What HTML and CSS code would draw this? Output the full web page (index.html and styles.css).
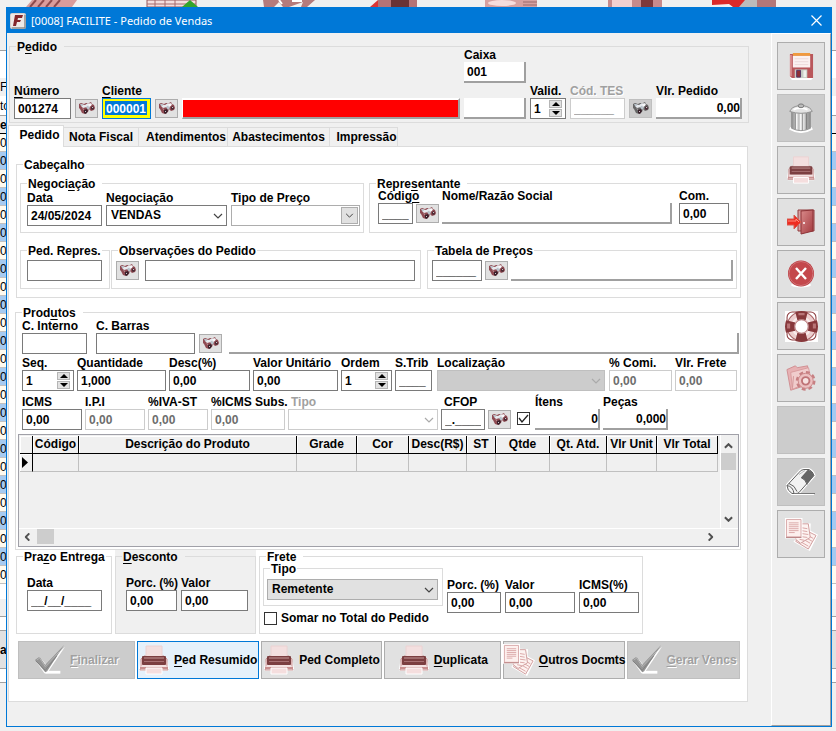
FILE: index.html
```html
<!DOCTYPE html>
<html lang="pt-BR">
<head>
<meta charset="utf-8">
<title>[0008] FACILITE - Pedido de Vendas</title>
<link rel="stylesheet" href="styles.css">
</head>
<body>
<svg class="defs" aria-hidden="true">
  <defs>
    <linearGradient id="g-red" x1="0" y1="0" x2="1" y2="1"><stop offset="0" stop-color="#d98a8a"/><stop offset="1" stop-color="#a33a3f"/></linearGradient>
    <linearGradient id="g-gray" x1="0" y1="0" x2="1" y2="0"><stop offset="0" stop-color="#8c8c8c"/><stop offset=".4" stop-color="#f4f4f4"/><stop offset="1" stop-color="#8a8a8a"/></linearGradient>
  </defs>
  <symbol id="i-bino" viewBox="0 0 16 13">
    <path d="M0 2l2-1 3 1 2-1 3 0 2-1 1 2 2 1 1 3-1 2-3 1-2-2-1 3-3 2-3-1-2-4-2-2z" fill="var(--lens)"/>
    <path d="M2 2l4 1 3-2 2 1-3 3-4 1-2-2z" fill="#e6eaee"/>
    <path d="M1 2h2l1 2-2 0zM7 5l3-2 1 3-2 2z" fill="#b9c4cc"/>
    <path d="M11 1l2 1-1 2-2 1-1-2z" fill="#f7f8fa"/>
    <path d="M5 8l3-1 1 2-2 3-2-1z" fill="#38202a"/>
    <path d="M12 5l2-1 1 3-2 1-1-1z" fill="#4a2a33"/>
    <path d="M6 9h1v1H6zM13 5h1v1h-1zM3 6l2 1v1z" fill="#cfc3c8"/>
  </symbol>
  <symbol id="i-chev" viewBox="0 0 10 6"><path d="M1 1l4 4 4-4" fill="none" stroke="currentColor" stroke-width="1.2"/></symbol>
  <symbol id="i-arrow" viewBox="0 0 10 6"><path d="M1 1l4 4 4-4" fill="none" stroke="#505050" stroke-width="2.2"/></symbol>
  <symbol id="i-printer" viewBox="0 0 32 30">
    <path d="M2 18l-1 6 1 2h28l1-2-1-6-3-4H5z" fill="#fff"/>
    <path d="M3 14l3-3h20l3 3v8l1 3H2l1-3z" fill="#ecd0d0" stroke="#c99595" stroke-width="1"/>
    <path d="M8 1h16v11H8z" fill="#f3dfdf" stroke="#ecd2d2" stroke-width="1"/>
    <rect x="4" y="11" width="24" height="9" rx="1" fill="#7c3f41"/>
    <path d="M6 12h20v2H6z" fill="#a06b6c"/><path d="M6 16h20v1H6z" fill="#a87072"/>
    <path d="M2 22h28v2H2z" fill="#c98f8f"/><path d="M4 20h24l1 2H3z" fill="#f4e2e2"/>
    <path d="M8 23h16v6H8z" fill="#f5dede" stroke="#fff"/>
  </symbol>
  <symbol id="i-docs" viewBox="0 0 34 34">
    <g fill="#fff" stroke="#fff" stroke-width="3"><path d="M21 12l11 6-7 14-14-8z"/><path d="M12 6l13 1-1 17-12-2z"/></g>
    <path d="M20 12l12 6-8 14-13-8z" fill="#fdf1ef" stroke="#cf9d9d"/>
    <path d="M22 17l7 4M21 20l7 4M19 22l7 4M17 25l7 4" stroke="#d9a4a4"/>
    <path d="M12 6l12 0 2 14-10 6-5-4z" fill="#fdf3f1" stroke="#cf9d9d"/>
    <path d="M17 10l6 1M17 13l6 1M17 16l7 1M15 19l8 1M15 22l5 1" stroke="#d9a4a4"/>
    <path d="M0 0h18v21H0z" fill="#fff"/>
    <path d="M1.500 1.500h15v18h-15z" fill="#fdf0ee" stroke="#d9a9a9"/>
    <path d="M4 5h10M4 7h10M4 9h10M4 11h10M4 13h10M4 15h6" stroke="#dba9a9"/>
    <path d="M1 20h16" stroke="#b57c7c"/>
  </symbol>
  <symbol id="i-check" viewBox="0 0 34 32">
    <path d="M12 29h16" stroke="#fff" stroke-width="3"/>
    <path d="M2 17l5-3 6 7L33 2 14 30h-3z" fill="#fff"/>
    <path d="M1 16l4-3 2 1 5 7L32 0 14 28l-2 1z" fill="#959595"/>
    <path d="M3 16l3-2 6 9L27 7" fill="none" stroke="#b5b5b5"/>
    <path d="M2 17l10 10L24 12" fill="none" stroke="#7f7f7f"/>
  </symbol>
  <symbol id="i-disk" viewBox="0 0 26 28">
    <path d="M1 3l2-2h22v25l-2 2H3l-2-3z" fill="#fff"/>
    <path d="M1 1h24v25H3l-2-2z" fill="#b9575b"/><path d="M1 2h2v22h-2z" fill="#d98f90"/>
    <path d="M4 0h18v3H4z" fill="#f09a3e"/><path d="M4 3h18v12H4z" fill="#fbf1f1"/>
    <path d="M6 6h14M6 9h14M6 12h14" stroke="#ecd9db"/>
    <path d="M6 17h13v9H6z" fill="#c6cdc5"/><path d="M8 18h4v7H8z" fill="#8e2f35" stroke="#536"/><path d="M15 18h3v7h-3z" fill="#eef1ec"/>
  </symbol>
  <symbol id="i-trash" viewBox="0 0 28 32">
    <path d="M2 27q12 7 24 0" stroke="#fff" stroke-width="3" fill="none"/>
    <path d="M4 8h20v19q-10 5-20 0z" fill="url(#g-gray)" stroke="#929292"/>
    <path d="M8 11v17M12 11v18M16 11v18M20 11v17" stroke="#777" stroke-width="1"/><path d="M9 11v17M13 11v18M17 11v18" stroke="#fff"/>
    <path d="M2 9q2-5 9-6h6q7 1 9 6-12 4-24 0z" fill="#e3e3e3" stroke="#8e8e8e"/><path d="M6 7q7-3 15 0" stroke="#fff" fill="none" stroke-width="2"/>
    <ellipse cx="14" cy="3" rx="3" ry="2" fill="#bbb" stroke="#777"/>
  </symbol>
  <symbol id="i-exit" viewBox="0 0 28 26">
    <path d="M11 1h16v21H11z" fill="#d9a0a0" stroke="#913a3d"/>
    <path d="M14 2l12-1v21l-12 3z" fill="url(#g-red)" stroke="#8d3337"/>
    <path d="M0 10h7V6l7 7-7 7v-4H0z" fill="#ee2c20" stroke="#d85b50"/><path d="M1 12h8v-2l3 3" stroke="#ff8b7d" fill="none"/>
    <circle cx="17" cy="14" r="1" fill="#fff"/>
  </symbol>
  <symbol id="i-cancel" viewBox="0 0 28 28">
    <ellipse cx="14" cy="25" rx="10" ry="2.5" fill="#fff"/>
    <circle cx="14" cy="13.500" r="13" fill="#b9383d"/><circle cx="14" cy="13.500" r="12" fill="#c4484c" stroke="#d17578"/>
    <path d="M9 8l10 11M19 8L9 19" stroke="#fff" stroke-width="2.4"/>
  </symbol>
  <symbol id="i-buoy" viewBox="0 0 32 30">
    <rect x="0" y="0" width="32" height="30" fill="#fff"/>
    <rect x="2" y="1" width="28" height="27" rx="5" fill="#fff" stroke="#8b3a3d"/>
    <circle cx="16" cy="15" r="10.500" fill="none" stroke="#edcfcf" stroke-width="8"/>
    <circle cx="16" cy="15" r="9" fill="none" stroke="#f9ecec" stroke-width="2"/>
    <circle cx="16" cy="15" r="14" fill="none" stroke="#a96466"/>
    <circle cx="16" cy="15" r="6.500" fill="#fff" stroke="#b87a7c"/>
    <path d="M10 1q6-2 12 0l-2 8q-4-2-8 0zM10 29q6 2 12 0l-2-8q-4 2-8 0zM1 9q-2 6 0 12l9-2q-2-4 0-8zM31 9q2 6 0 12l-9-2q2-4 0-8z" fill="#87383b"/>
    <path d="M13 2h6v2h-6zM2 12h3v5H2zM27 12h3v5h-3z" fill="#b87476"/>
  </symbol>
  <symbol id="i-gear" viewBox="0 0 32 28">
    <path d="M1 5l9-4 2 2 11-2 1 20-19 6z" fill="#e7b1b3" stroke="#cf8d90"/>
    <path d="M5 8l19-5 3 14-20 9z" fill="#f0cccc" stroke="#d79b9d"/><path d="M8 12l-1 12" stroke="#d39598"/>
    <circle cx="21" cy="17" r="9" fill="none" stroke="#c77f82" stroke-width="3" stroke-dasharray="4 3.070"/>
    <circle cx="21" cy="17" r="8" fill="#ecc0c1" stroke="#cb8688"/><circle cx="21" cy="17" r="4" fill="#f6e1e0" stroke="#bf7376" stroke-width="2"/>
  </symbol>
  <symbol id="i-eraser" viewBox="0 0 30 27">
    <path d="M1 17L13 4q2-3 5-3h5q4 2 5 6L13 24q-1 1-3 1H6q-5-3-5-8z" fill="#fafafa" stroke="#fff" stroke-width="3"/>
    <path d="M1 17L13 4q2-3 5-3h5q4 2 5 6L13 24q-1 1-3 1H6q-5-3-5-8z" fill="#f2f2f2" stroke="#606060"/>
    <path d="M22 1q5 2 6 6l-7 9q-1-5-6-7z" fill="#666"/>
    <path d="M15 9q5 2 6 7M1 17q6 1 7 8M3 15q6 2 8 8" fill="none" stroke="#606060"/>
    <path d="M13 6l6-4" stroke="#bbb"/><path d="M8 25h21" stroke="#777"/><path d="M9 26h19" stroke="#fff"/>
  </symbol>
</svg>

<div class="desktop">
  <div class="strip-top">
    <svg viewBox="0 0 836 7" preserveAspectRatio="xMinYMin slice" aria-hidden="true">
      <path d="M32 0h45l-5 7H26z" fill="#d99c9c"/><path d="M36 0l-6 7M44 0l-6 7M52 0l-6 7M60 0l-6 7" stroke="#8d4a4d" stroke-width="2"/>
      <path d="M147 0h49v7h-49z" fill="#f4dede" stroke="#94575a"/><path d="M155 0v7M165 0v7M175 0v7M147 4h49" stroke="#a66a6c"/><path d="M182 7l8-7 8 7z" fill="#34a52c"/>
      <path d="M263 0h52l-8 7h-6l2-5-14 5h-6l-4-5-5 5h-10z" fill="#b57b7c"/><path d="M279 0l3 4M292 1l10 0" stroke="#fff" stroke-width="2"/>
      <path d="M370 7l8-7v7z" fill="#dc3535"/><path d="M378 0h39v7h-39z" fill="#b57376"/><path d="M391 0h18v7h-18z" fill="#693336"/>
      <path d="M485 0h52v7h-52z" fill="#d6a1a1"/><ellipse cx="502" cy="3" rx="14" ry="3" fill="#f6dcdc"/><path d="M523 2h14M523 5h14" stroke="#99696a"/>
      <path d="M608 0h54v7h-54z" fill="#c78a8c"/><path d="M612 0h20v7h-20z" fill="#f3d0d0"/><path d="M641 0h12v7h-12z" fill="#7d393c"/>
      <path d="M712 0h33v7h-12l-4-3-17 1z" fill="#db2929"/><path d="M745 0h12v7h-18z" fill="#bbb"/><path d="M757 0h19v7h-19z" fill="#b27779"/>
    </svg>
  </div>
  <div class="strip strip-left" aria-hidden="true">
    <span class="s-head"></span><span class="s-field"></span><span class="s-cap">F:</span><span class="s-cell">to</span><span class="s-title">e</span>
    <span class="s-rows"><i>0</i><i>0</i><i>0</i><i>0</i><i>0</i><i>0</i><i>0</i><i>0</i><i>0</i><i>0</i><i>0</i><i>0</i><i>0</i><i>0</i><i>0</i><i>0</i><i>0</i><i>0</i><i>0</i><i>0</i><i>0</i><i>0</i><i>0</i><i>0</i><i>0</i></span>
    <span class="s-gap"></span><span class="s-bar"></span><span class="s-line"></span><span class="s-btn">a</span><span class="s-line"></span>
  </div>

  <main class="window">
    <header class="titlebar">
      <svg class="logo" viewBox="0 0 16 16" aria-hidden="true"><rect x="0" y="0" width="16" height="16" rx="2" fill="#d8d0cc"/><rect x="1" y="1" width="13" height="13" fill="#efe9e6"/><path d="M15 2v13H2" stroke="#777" fill="none"/><path d="M5 2h8l-1 3H8L7.500 7H11l-1 2H7l-1 4H3z" fill="#84262b"/></svg>
      <h1>[0008] FACILITE - Pedido de Vendas</h1>
      <button class="close" aria-label="Fechar"><svg viewBox="0 0 11 11"><path d="M.5.5l10 10M10.500.5l-10 10" stroke="#fff" stroke-width="1.200"/></svg></button>
    </header>

    <div class="client">
      <div class="content">
        <fieldset class="group order">
          <legend class="wide">P<u>e</u>dido</legend>
          <div class="field caixa"><label for="caixa">Caixa</label><input id="caixa" class="flat" value="001" readonly></div>
          <div class="field"><label for="numero"><u>N</u>úmero</label><input id="numero" value="001274"></div>
          <button class="find" aria-label="Buscar número"><svg><use href="#i-bino"/></svg></button>
          <div class="field"><label for="cliente"><u>C</u>liente</label><input id="cliente" class="active" value="000001"></div>
          <button class="find" aria-label="Buscar cliente"><svg><use href="#i-bino"/></svg></button>
          <input class="flat alert" aria-label="Nome do cliente" readonly>
          <input class="flat" aria-label="Situação" readonly>
          <div class="field"><label for="valid">Valid.</label><div class="spin"><input id="valid" value="1"><span><button aria-label="Mais"></button><button aria-label="Menos"></button></span></div></div>
          <div class="field off ghost"><label for="tes">Cód. TES</label><input id="tes" value="______" disabled></div>
          <button class="find off" aria-label="Buscar TES" disabled><svg><use href="#i-bino"/></svg></button>
          <div class="field"><label for="vlr">Vlr. Pedido</label><input id="vlr" class="flat num" value="0,00" readonly></div>
        </fieldset>

        <nav class="tabs" role="tablist">
          <button role="tab" aria-selected="true" class="t1">Pedido</button><button role="tab" class="t2">Nota Fiscal</button><button role="tab" class="t3">Atendimentos</button><button role="tab" class="t4">Abastecimentos</button><button role="tab" class="t5">Impressão</button>
        </nav>

        <section class="page">
          <fieldset class="group head">
            <legend>Cabeçalho</legend>
            <div class="line">
              <fieldset class="group nego">
                <legend class="wide">Negoci<u>a</u>ção</legend>
                <div class="field w75"><label for="data">Data</label><input id="data" value="24/05/2024"></div>
                <div class="field w121"><label for="neg">Negociação</label><div class="sel"><select id="neg"><option>VENDAS</option></select><svg><use href="#i-chev"/></svg></div></div>
                <div class="field grow"><label for="tpreco">Tipo de Preço</label><div class="sel boxed"><select id="tpreco"><option></option></select><svg><use href="#i-chev"/></svg></div></div>
              </fieldset>
              <fieldset class="group rep">
                <legend class="wide">Repre<u>s</u>entante</legend>
                <div class="field w35"><label for="rcod">Códig<u>o</u></label><input id="rcod" value="____"></div>
                <button class="find" aria-label="Buscar representante"><svg><use href="#i-bino"/></svg></button>
                <div class="field grow"><label for="rnome">Nome/Razão Social</label><input id="rnome" class="flat" readonly></div>
                <div class="field w50 apart"><label for="com">Com.</label><input id="com" value="0,00"></div>
              </fieldset>
            </div>
            <div class="line second">
              <fieldset class="group prep"><legend>Ped. Repres.</legend><input class="grow" aria-label="Ped. Repres."></fieldset>
              <fieldset class="group obs"><legend>Observações do Pedido</legend><button class="find" aria-label="Buscar observação"><svg><use href="#i-bino"/></svg></button><input class="grow" aria-label="Observações do Pedido"></fieldset>
              <fieldset class="group tab"><legend>Tabela de Preços</legend><input class="w50" aria-label="Código da tabela" value="______"><button class="find" aria-label="Buscar tabela"><svg><use href="#i-bino"/></svg></button><input class="flat grow" aria-label="Tabela de Preços" readonly></fieldset>
            </div>
          </fieldset>

          <fieldset class="group prod">
            <legend class="wide">Prod<u>u</u>tos</legend>
            <div class="row r1">
              <div class="field w65"><label for="cint">C. Interno</label><input id="cint"></div>
              <div class="field w99 apart"><label for="cbar">C. Barras</label><input id="cbar"></div>
              <button class="find" aria-label="Buscar produto"><svg><use href="#i-bino"/></svg></button>
              <input class="flat grow wideflat" aria-label="Produto" readonly>
            </div>
            <div class="row r2">
              <div class="field w52"><label for="seq">Seq.</label><div class="spin"><input id="seq" value="1"><span><button aria-label="Mais"></button><button aria-label="Menos"></button></span></div></div>
              <div class="field w89"><label for="qtd">Quantidade</label><input id="qtd" value="1,000"></div>
              <div class="field w81"><label for="desc">Desc(%)</label><input id="desc" value="0,00"></div>
              <div class="field w85"><label for="vun">Valor Unitário</label><input id="vun" value="0,00"></div>
              <div class="field w51"><label for="ordem">Ordem</label><div class="spin"><input id="ordem" value="1"><span><button aria-label="Mais"></button><button aria-label="Menos"></button></span></div></div>
              <div class="field w37"><label for="strib">S.Trib</label><input id="strib" value="____"></div>
              <div class="field grow loc"><label for="loc">Localização</label><div class="sel fill"><select id="loc" disabled><option></option></select><svg><use href="#i-chev"/></svg></div></div>
              <div class="field w63"><label for="comi">% Comi.</label><input id="comi" value="0,00" disabled></div>
              <div class="field w62"><label for="frete">Vlr. Frete</label><input id="frete" value="0,00" disabled></div>
            </div>
            <div class="row r3">
              <div class="field w60"><label for="icms">ICMS</label><input id="icms" value="0,00"></div>
              <div class="field w60"><label for="ipi">I.P.I</label><input id="ipi" value="0,00" disabled></div>
              <div class="field w60"><label for="iva">%IVA-ST</label><input id="iva" value="0,00" disabled></div>
              <div class="field w74"><label for="subs">%ICMS Subs.</label><input id="subs" value="0,00" disabled></div>
              <div class="field off inset w150"><label for="tipo">Tipo</label><div class="sel"><select id="tipo" disabled><option></option></select><svg><use href="#i-chev"/></svg></div></div>
              <div class="field inset w44"><label for="cfop">CFOP</label><input id="cfop" value="_.____"></div>
              <button class="find" aria-label="Buscar CFOP"><svg><use href="#i-bino"/></svg></button>
              <label class="tick"><input type="checkbox" checked aria-label="Usar CFOP"><svg viewBox="0 0 13 13"><path d="M2 6l3 4 6-7" fill="none" stroke="#222" stroke-width="1.300"/></svg></label>
              <div class="field w65"><label for="itens">Ítens</label><input id="itens" class="flat num" value="0" readonly></div>
              <div class="field w65"><label for="pecas">Peças</label><input id="pecas" class="flat num" value="0,000" readonly></div>
            </div>

            <div class="grid">
              <div class="sheet">
                <table>
                  <colgroup><col class="c12"><col class="c46"><col><col class="c60"><col class="c52"><col class="c58"><col class="c29"><col class="c54"><col class="c57"><col class="c50"><col class="c61"></colgroup>
                  <thead><tr><th></th><th>Código</th><th>Descrição do Produto</th><th>Grade</th><th>Cor</th><th>Desc(R$)</th><th>ST</th><th>Qtde</th><th>Qt. Atd.</th><th>Vlr Unit</th><th>Vlr Total</th></tr></thead>
                  <tbody><tr><th scope="row"><svg class="ptr" viewBox="0 0 6 11"><path d="M0 0l6 5.500-6 5.500z"/></svg></th><td></td><td></td><td></td><td></td><td></td><td></td><td></td><td></td><td></td><td></td></tr></tbody>
                </table>
              </div>
              <div class="vbar"><svg class="up"><use href="#i-arrow"/></svg><span class="thumb"></span><svg class="down"><use href="#i-arrow"/></svg></div>
              <div class="hbar"><svg class="left"><use href="#i-arrow"/></svg><span class="thumb"></span><svg class="right"><use href="#i-arrow"/></svg></div>
            </div>
          </fieldset>

          <div class="lower">
            <div class="slot"><fieldset class="group prazo"><legend>Pra<u>z</u>o Entrega</legend><div class="field w75"><label for="pdata">Data</label><input id="pdata" value="__/__/____"></div></fieldset></div>
            <div class="slot shaded"><fieldset class="group descto"><legend class="wide"><u>D</u>esconto</legend>
              <div class="field w51"><label for="dp">Porc. (%)</label><input id="dp" value="0,00"></div>
              <div class="field w67"><label for="dv">Valor</label><input id="dv" value="0,00"></div></fieldset></div>
            <div class="slot"><fieldset class="group frete"><legend class="wide">Fre<u>t</u>e</legend>
              <div class="mode">
                <fieldset class="group ftipo"><legend>Tipo</legend><div class="sel btnlike"><select aria-label="Tipo"><option>Remetente</option></select><svg><use href="#i-chev"/></svg></div></fieldset>
                <label class="tick"><input type="checkbox">Somar no Total do Pedido</label>
              </div>
              <div class="field w54"><label for="fp">Porc. (%)</label><input id="fp" value="0,00"></div>
              <div class="field w70"><label for="fv">Valor</label><input id="fv" value="0,00"></div>
              <div class="field w60"><label for="fi">ICMS(%)</label><input id="fi" value="0,00"></div>
            </fieldset></div>
          </div>

          <div class="actions">
            <button class="a1" disabled><svg><use href="#i-check"/></svg><span><u>F</u>inalizar</span></button>
            <button class="a2 hot"><svg><use href="#i-printer"/></svg><span><u>P</u>ed Resumido</span></button>
            <button class="a2"><svg><use href="#i-printer"/></svg><span>Ped Completo</span></button>
            <button class="a1"><svg><use href="#i-printer"/></svg><span><u>D</u>uplicata</span></button>
            <button class="a2"><svg><use href="#i-docs"/></svg><span><u>O</u>utros Docmts</span></button>
            <button class="a3" disabled><svg><use href="#i-check"/></svg><span><u>G</u>erar Vencs</span></button>
          </div>
        </section>
      </div>

      <aside class="toolbar">
        <button aria-label="Salvar"><svg class="s26"><use href="#i-disk"/></svg></button>
        <button aria-label="Excluir" disabled><svg><use href="#i-trash"/></svg></button>
        <button aria-label="Imprimir"><svg><use href="#i-printer"/></svg></button>
        <button aria-label="Sair"><svg class="s28"><use href="#i-exit"/></svg></button>
        <button aria-label="Cancelar"><svg class="s28"><use href="#i-cancel"/></svg></button>
        <button aria-label="Ajuda"><svg class="s32"><use href="#i-buoy"/></svg></button>
        <button aria-label="Configurar"><svg><use href="#i-gear"/></svg></button>
        <button aria-label="Vazio" disabled></button>
        <button aria-label="Limpar" disabled><svg><use href="#i-eraser"/></svg></button>
        <button aria-label="Documentos"><svg class="s32"><use href="#i-docs"/></svg></button>
      </aside>
    </div>
  </main>

  <div class="strip strip-right" aria-hidden="true">
    <span class="s-head"></span><span class="s-field"></span><span class="s-cap"></span><span class="s-cell"></span><span class="s-title"></span>
    <span class="s-rows"><i></i><i></i><i></i><i></i><i></i><i></i><i></i><i></i><i></i><i></i><i></i><i></i><i></i><i></i><i></i><i></i><i></i><i></i><i></i><i></i><i></i><i></i><i></i><i></i><i></i></span>
    <span class="s-gap"></span><span class="s-bar"></span><span class="s-line"></span><span class="s-btn"></span><span class="s-line"></span>
  </div>
</div>
</body>
</html>
```
FILE: styles.css
```css
* { box-sizing: border-box; }
body {
  margin: 0;
  background: #f0f0f0;
  color: #000;
  font: bold 12px/13px "Liberation Sans", Arial, sans-serif;
}
.defs { position: absolute; width: 0; height: 0; }
button, input, select { font: inherit; color: inherit; margin: 0; padding: 0; border-radius: 0; }
svg { display: block; flex: none; }
u { text-underline-offset: 2px; }

/* desktop behind the window */
.desktop {
  display: grid;
  grid-template: 7px 1fr / 6px 1fr 4px;
  min-height: 100vh;
  padding-bottom: 4px;
}
.strip-top { grid-column: 1 / -1; overflow: hidden; }
.strip-top svg { width: 836px; height: 7px; }
.strip { display: flex; flex-direction: column; overflow: hidden; font-weight: normal; min-width: 0; }
.strip span { flex: none; overflow: hidden; white-space: nowrap; }
.s-head { height: 43px; }
.s-field { height: 28px; background: #fff; border-top: 1px solid #a0a0a0; }
.s-cap { height: 18px; line-height: 18px; }
.s-cell { height: 20px; line-height: 20px; background: #fff; border-bottom: 1px solid #a0a0a0; }
.s-title { height: 18px; line-height: 18px; font-weight: bold; border-bottom: 1px solid #000; }
.s-rows i { display: block; height: 18px; line-height: 18px; font-style: normal; background: #fffbf0; border-bottom: 1px solid #c0c0c0; }
.s-rows i:nth-child(even) { background: #a6caf0; }
.s-gap { height: 15px; background: #fff; }
.s-bar { height: 18px; border-bottom: 1px solid #a0a0a0; }
.s-line { height: 14px; background: #fff; border-bottom: 1px solid #a0a0a0; }
.s-btn { height: 38px; line-height: 38px; background: #e1e1e1; border-bottom: 1px solid #a0a0a0; font-weight: bold; }

/* window frame */
.window { display: flex; flex-direction: column; min-width: 0; border: 1px solid #0078d7; background: #f0f0f0; }
.titlebar { display: flex; align-items: center; gap: 5px; height: 25px; padding: 0 9px 0 3px; background: #0078d7; color: #fff; }
.logo { width: 16px; height: 16px; }
.titlebar h1 { flex: 1; margin: 0; font: 11px/16px "Noto Sans", "Open Sans", sans-serif; }
.close { border: 0; background: none; }
.close svg { width: 11px; height: 11px; }
.client { flex: 1; display: flex; }
.content { flex: 1; min-width: 0; padding: 13px 22px 0 1px; }

/* group boxes */
.group { position: relative; display: flex; min-width: 0; margin: 0; padding: 0; border: 1px solid #dcdcdc; background: inherit; }
.group > legend { position: absolute; top: -6px; left: 6px; padding: 0 1px; line-height: 12px; background: inherit; white-space: nowrap; }
.group > legend.wide { padding-right: 7px; }

/* fields */
.field { display: flex; flex-direction: column; min-width: 0; }
.field label { height: 13px; white-space: nowrap; }
input:not([type]) { display: block; width: 100%; min-width: 0; height: 21px; padding: 0 3px; background: #fff; border: 1px solid #7a7a7a; outline: 0; }
input:not([type]):disabled { color: #6d6d6d; border-color: #ccc; }
input.grow { width: auto; }
input.w50 { width: 50px; }
input.flat:not([type]) { border: 0 solid #a0a0a0; border-width: 0 2px 2px 0; }
input.num { text-align: right; padding-right: 0; }
input.active:not([type]) { color: #fff; border-color: #0078d7; background: linear-gradient(#0078d7, #0078d7) 2px 2px / 42px 14px no-repeat #ff0; }
input.alert:not([type]) { background: #f00; border-width: 2px 2px 2px 1px; border-color: #fff #a0a0a0 #a0a0a0 #fff; }
.off label { color: #a0a0a0; }
.inset label { padding-left: 3px; }
.ghost label { text-shadow: 1px 1px #fff; }
.grow { flex: 1; }
.find { display: flex; align-items: center; justify-content: center; flex: none; width: 23px; height: 19px; margin-bottom: 1px; background: #e1e1e1; border: 1px solid #adadad; --lens: #8f4a52; }
.find svg { width: 16px; height: 13px; }
.find.off { background: #ccc; border-color: #bfbfbf; --lens: #666; }
.spin { display: flex; align-items: center; height: 21px; padding-right: 3px; background: #fff; border: 1px solid #7a7a7a; }
.spin input:not([type]) { flex: 1; height: 19px; border: 0; }
.spin span { display: grid; gap: 1px; flex: none; }
.spin button { display: flex; align-items: center; justify-content: center; width: 13px; height: 8px; background: #e1e1e1; border: 1px solid #b5b5b5; }
.spin button::before { content: ""; border: 4px solid transparent; border-top: 0; border-bottom: 4px solid #000; }
.spin button + button::before { border-bottom: 0; border-top: 4px solid #000; }
.sel { position: relative; height: 21px; }
.sel select { display: block; width: 100%; height: 21px; padding: 0 20px 0 4px; appearance: none; background: #fff; border: 1px solid #7a7a7a; opacity: 1; }
.sel svg { position: absolute; right: 4px; top: 8px; width: 10px; height: 6px; color: #444; pointer-events: none; }
.sel.boxed select { border-color: #adadad; }
.sel.boxed svg { right: 2px; top: 2px; width: 17px; height: 17px; padding: 5px 3px; background: #e1e1e1; border: 1px solid #adadad; }
.sel select:disabled { border-color: #ccc; }
.sel select:disabled + svg { color: #aaa; }
.sel.fill select { background: #ccc; border-color: #bfbfbf; }
.sel.btnlike select { background: #e1e1e1; border-color: #adadad; }
.tick { position: relative; display: flex; align-items: center; gap: 4px; white-space: nowrap; }
.tick input { appearance: none; width: 13px; height: 13px; background: #fff; border: 1px solid #333; }
.tick svg { position: absolute; left: 0; top: 0; width: 13px; height: 13px; }
.w35 { width: 35px; } .w37 { width: 37px; } .w44 { width: 44px; } .w50 { width: 50px; }
.w51 { width: 51px; } .w52 { width: 52px; } .w54 { width: 54px; } .w60 { width: 60px; }
.w62 { width: 62px; } .w63 { width: 63px; } .w65 { width: 65px; } .w67 { width: 67px; }
.w70 { width: 70px; } .w74 { width: 74px; } .w75 { width: 75px; } .w81 { width: 81px; }
.w85 { width: 85px; } .w89 { width: 89px; } .w99 { width: 99px; } .w121 { width: 121px; }
.w150 { width: 150px; }

/* order header */
.order {
  display: grid;
  grid-template-columns: 57px 23px 49px 23px 1fr 62px 36px 55px 23px 86px;
  gap: 2px 4px;
  align-items: end;
  margin-left: 1px;
  padding: 2px 6px 3px 4px;
  background: #f0f0f0;
}
.caixa { grid-column: 6; }
.order > .field:nth-of-type(2) { grid-column: 1; }

/* tabs */
.tabs { display: flex; align-items: flex-end; height: 22px; margin-top: 2px; }
.tabs button { height: 19px; margin-bottom: 1px; padding: 0; background: #f0f0f0; border: 1px solid #dcdcdc; border-width: 1px 1px 0 0; white-space: nowrap; }
.tabs button[aria-selected] { position: relative; z-index: 1; height: 22px; margin-bottom: 0; padding: 0 0 2px 7px; background: #fff; border-left-width: 1px; }
.t1 { width: 56px; } .t2 { width: 75px; } .t3 { width: 89px; } .t4 { width: 102px; } .t5 { width: 68px; }
.tabs .t3, .tabs .t5 { padding-left: 6px; }
.page { margin: -1px 1px 0 0; padding: 17px 6px 22px; background: #fff; border: 1px solid #dcdcdc; }

/* header group */
.head { flex-direction: column; gap: 17px; margin-left: 1px; padding: 18px 3px 8px; }
.line { display: flex; gap: 5px; background: inherit; }
.nego { width: 344px; gap: 4px; padding: 8px 3px 6px 6px; }
.rep { flex: 1; align-items: flex-end; gap: 3px; padding: 6px 7px 8px 8px; }
.rep .apart { margin-left: 4px; }
.second { gap: 0; }
.second .group { align-items: center; padding: 9px 3px 7px 4px; gap: 3px; }
.second .prep { width: 90px; padding: 9px 7px 7px 6px; }
.second .obs { width: 310px; margin: 0 6px 0 1px; padding-right: 5px; gap: 6px; }
.second .tab { flex: 1; }

/* products */
.prod { flex-direction: column; margin-top: 14px; padding: 7px 1px 2px 2px; }
.row { display: flex; align-items: flex-end; gap: 3px; padding: 0 2px 0 4px; }
.r1 { padding-right: 0; gap: 4px; }
.r1 .apart { margin-left: 5px; }
.r1 .wideflat { margin-left: 3px; }
.r2 { margin-top: 3px; }
.loc { margin: 0 1px 0 2px; }
.r3 { margin: 5px 0 4px; }
.r3 .tick { height: 13px; margin: 0 2px 5px 3px; }

/* item grid */
.grid { display: grid; grid-template: 93px 18px / 1fr 17px; border: 1px solid #a0a0a8; padding: 0; background: #f0f0f0; }
.sheet { padding: 1px 2px 0 1px; border-right: 1px solid #fff; }
table { width: 100%; table-layout: fixed; border-collapse: separate; border-spacing: 0; }
th, td { height: 18px; padding: 0; overflow: hidden; white-space: nowrap; border-right: 1px solid #c0c0c0; border-bottom: 1px solid #c0c0c0; }
thead th { border-color: #000; box-shadow: inset 1px 1px #fff; }
tbody th { border-right-color: #000; box-shadow: inset 1px 1px #fff; }
.ptr { width: 6px; height: 11px; margin-left: 2px; }
.c12 { width: 13px; } .c46 { width: 46px; } .c60 { width: 60px; } .c52 { width: 52px; } .c58 { width: 58px; }
.c29 { width: 29px; } .c54 { width: 54px; } .c57 { width: 57px; } .c50 { width: 50px; } .c61 { width: 61px; }
.vbar { display: flex; flex-direction: column; align-items: center; padding: 8px 3px 6px 0; }
.vbar svg, .hbar svg { width: 9px; height: 6px; }
.vbar .up { transform: rotate(180deg); }
.vbar .thumb { width: 15px; height: 17px; margin-top: 4px; background: #cdcdcd; }
.vbar .down { margin-top: auto; }
.hbar { grid-column: 1 / -1; display: flex; align-items: center; padding: 0 23px 2px 4px; border-top: 1px solid #fff; }
.hbar .left { transform: rotate(90deg); }
.hbar .right { margin-left: auto; transform: rotate(-90deg); }
.hbar .thumb { width: 17px; height: 15px; margin-left: 5px; background: #cdcdcd; }

/* delivery, discount, freight */
.lower { display: flex; gap: 3px; margin-left: 1px; background: #fff; }
.slot { display: flex; padding-top: 6px; background: inherit; }
.slot.shaded { background: #f0f0f0; }
.prazo { width: 96px; padding: 20px 9px 0 10px; }
.descto { width: 141px; gap: 4px; padding: 20px 7px 0 10px; }
.frete { gap: 4px; padding: 11px 3px 8px; }
.mode { display: flex; flex-direction: column; gap: 6px; background: inherit; }
.ftipo { width: 180px; padding: 10px 4px 5px 3px; }
.ftipo .sel { flex: 1; }
.mode .tick { margin-left: 1px; }
.frete > .field { margin-top: 11px; }

/* actions */
.actions { display: flex; gap: 2px; margin: 7px 1px 0 3px; }
.actions button, .toolbar button { display: flex; align-items: center; justify-content: center; background: #e1e1e1; border: 1px solid #adadad; }
.actions button { gap: 4px; height: 38px; min-width: 0; white-space: nowrap; }
.actions .a1 { flex: 117 1 0; }
.actions .a2 { flex: 122 1 0; }
.actions .a3 { flex: 113 1 0; }
.actions svg { width: 32px; height: 32px; }
.actions .hot { background: #e5f1fb; border-color: #0078d7; }
.actions button:disabled, .toolbar button:disabled { background: #ccc; border-color: #bfbfbf; color: #a0a0a0; }
.actions button:disabled { text-shadow: 1px 1px #fff; }

/* right toolbar */
.toolbar { display: flex; flex-direction: column; gap: 4px; width: 60px; padding: 8px 5px; border: 1px solid; border-color: #fff #a0a0a0 #a0a0a0 #fff; }
.toolbar button { height: 48px; }
.toolbar svg { width: 30px; height: 30px; }
.toolbar .s26 { width: 27px; height: 27px; }
.toolbar .s28 { width: 28px; height: 28px; }
.toolbar .s32 { width: 33px; height: 33px; }
```
